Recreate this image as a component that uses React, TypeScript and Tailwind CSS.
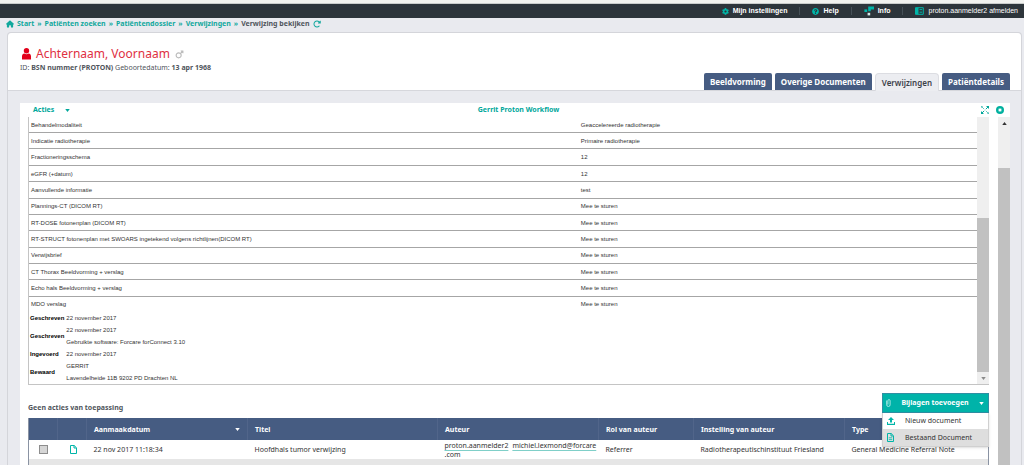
import type { ReactNode } from "react";
import { FaCog, FaQuestionCircle } from "react-icons/fa";
import { FaHouse, FaRotateRight, FaMars } from "react-icons/fa6";

const humanist = "font-['Noto_Sans',sans-serif]";
const arial = "font-['Liberation_Sans',sans-serif]";

const crumbs = ["Start", "Patiënten zoeken", "Patiëntendossier", "Verwijzingen"];

const fields: [string, string][] = [
  ["Behandelmodaliteit", "Geaccelereerde radiotherapie"],
  ["Indicatie radiotherapie", "Primaire radiotherapie"],
  ["Fractioneringsschema", "12"],
  ["eGFR (+datum)", "12"],
  ["Aanvullende informatie", "test"],
  ["Plannings-CT (DICOM RT)", "Mee te sturen"],
  ["RT-DOSE fotonenplan (DICOM RT)", "Mee te sturen"],
  ["RT-STRUCT fotonenplan met SWOARS ingetekend volgens richtlijnen(DICOM RT)", "Mee te sturen"],
  ["Verwijsbrief", "Mee te sturen"],
  ["CT Thorax Beeldvorming + verslag", "Mee te sturen"],
  ["Echo hals Beeldvorming + verslag", "Mee te sturen"],
  ["MDO verslag", "Mee te sturen"],
];

const meta: [string, string[]][] = [
  ["Geschreven", ["22 november 2017"]],
  ["Geschreven", ["22 november 2017", "Gebruikte software: Forcare forConnect 3.10"]],
  ["Ingevoerd", ["22 november 2017"]],
  ["Bewaard", ["GERRIT", "Lavendelheide 11B 9202 PD Drachten NL"]],
];

const tabs = ["Beeldvorming", "Overige Documenten", "Verwijzingen", "Patiëntdetails"];

function Caret({ className }: { className: string }) {
  return (
    <svg viewBox="0 0 6 4" className={className} fill="currentColor" aria-hidden="true">
      <path d="M0 0h6L3 4z" />
    </svg>
  );
}

function PersonIcon() {
  return (
    <svg viewBox="0 0 9 12" className="h-3 w-[9px] text-[#e2001a]" fill="currentColor" aria-hidden="true">
      <circle cx="4.5" cy="2.8" r="2.7" />
      <path d="M0 11.6V8.2C0 6.6 1 5.6 2.4 5.4c1.2 1 3 1 4.2 0C8 5.600 9 6.600 9 8.200v3.400z" />
    </svg>
  );
}

function InfoIcon() {
  return (
    <svg viewBox="0 0 10 10" className="size-[10px]" aria-hidden="true">
      <path d="M4.200.6H10v2.800H6.800v1.800H4.200z" fill="#00b5a8" />
      <path d="M.4 3.400h2.800v2.600H.4z" fill="#00b5a8" />
      <path d="M3.600 6.800h2.600v2.600H3.600z" fill="#d5e9ea" />
    </svg>
  );
}

function LogoutIcon() {
  return (
    <svg viewBox="0 0 9 8" className="h-2 w-[9px]" aria-hidden="true">
      <path d="M.5.7h7.800v6.600H.5z" fill="none" stroke="#00b5a8" />
      <path d="M.5.7h3v6.600h-3z" fill="#00b5a8" />
      <path d="M4.500 2.600h2.700M4.500 5.200h2.700" stroke="#00b5a8" />
    </svg>
  );
}

function FileIcon({ lines = false }: { lines?: boolean }) {
  return (
    <svg viewBox="0 0 7 9" className="h-[9px] w-[7px] text-[#00b5a8]" fill="none" stroke="currentColor" aria-hidden="true">
      <path d="M.5.5h3.700l2.300 2.300v5.700h-6zM4 .5V3h2.500" />
      {lines && <path d="M1.800 4.800h3.400M1.800 6.600h3.400" strokeWidth=".8" />}
    </svg>
  );
}

function UploadIcon() {
  return (
    <svg viewBox="0 0 8 8" className="size-2 text-[#00b5a8]" fill="currentColor" aria-hidden="true">
      <path d="M4 0l3 3H5v2.600H3V3H1z" />
      <path d="M0 5h1v1.800h6V5h1v3H0z" />
    </svg>
  );
}

function ClipIcon() {
  return (
    <svg viewBox="0 0 5 8" className="h-2 w-[5px]" fill="none" stroke="#b6ece8" strokeWidth=".9" aria-hidden="true">
      <path d="M.7 1.500v4.300a1.700 1.700 0 003.400 0V1.700a1.100 1.100 0 00-2.200 0v3.900" />
    </svg>
  );
}

function ExpandIcon() {
  return (
    <svg viewBox="0 0 8 8" className="size-2 text-[#00a79b]" fill="currentColor" aria-hidden="true">
      <path d="M5 0h3v3zM3 8H0V5z" />
      <path d="M0 0h2.200L0 2.200zM8 8H5.800L8 5.800z" opacity=".6" />
      <path d="M7 1L4.800 3.200M1 7l2.200-2.200" stroke="currentColor" />
      <path d="M.8.8l2.400 2.400M7.200 7.200L4.800 4.800" stroke="currentColor" opacity=".6" />
    </svg>
  );
}

function CloseIcon() {
  return (
    <svg viewBox="0 0 8 8" className="size-2" aria-hidden="true">
      <circle cx="4" cy="4" r="4" fill="#00b09f" />
      <path d="M2.700 2.700l2.600 2.600M5.300 2.700L2.700 5.300" stroke="#fff" strokeWidth="1.300" />
    </svg>
  );
}

function TopLink({ icon, children, bold = true }: { icon: ReactNode; children: ReactNode; bold?: boolean }) {
  return (
    <a href="#" className={`flex items-center gap-1 ${bold ? "font-bold" : ""}`}>
      {icon}
      {children}
    </a>
  );
}

function Divider() {
  return <span className="mx-3 h-2 w-px bg-[#465057]" />;
}

function Th({ children, className = "" }: { children?: ReactNode; className?: string }) {
  return <th className={`border-r border-[#51658a] px-[7px] text-left font-bold ${className}`}>{children}</th>;
}

export default function App() {
  return (
    <div className={`flex h-screen flex-col overflow-hidden bg-[#e9eaef] text-[7px] leading-[12px] text-[#333] ${humanist}`}>
      <div className="h-1 shrink-0 border-b border-[#c9cccb] bg-[#f1f2ef]" />
      <nav className={`flex h-[14px] shrink-0 items-center justify-end bg-[#2d353b] pr-[6px] text-white ${arial}`}>
        <TopLink icon={<FaCog className="size-[7px] text-[#00b5a8]" />}>Mijn instellingen</TopLink>
        <Divider />
        <TopLink icon={<FaQuestionCircle className="size-[7px] text-[#00b5a8]" />}>Help</TopLink>
        <Divider />
        <TopLink icon={<InfoIcon />}>Info</TopLink>
        <Divider />
        <TopLink bold={false} icon={<LogoutIcon />}>proton.aanmelder2 afmelden</TopLink>
      </nav>

      <div className="flex h-[14px] shrink-0 items-center gap-[3px] pb-[2px] pl-[6px] font-bold text-[#12a89d]">
        <FaHouse className="size-2" />
        {crumbs.map((c) => (
          <span key={c} className="flex gap-[3px]">
            <a href="#">{c}</a>
            <span>»</span>
          </span>
        ))}
        <span className="text-[#50555c]">Verwijzing bekijken</span>
        <FaRotateRight className="size-2" />
      </div>

      <main className="ml-[7px] mr-[2px] flex min-h-0 flex-1 flex-col rounded-t border border-b-0 border-[#d4d5da]">
        <header className="flex h-[58px] shrink-0 items-end justify-between rounded-t border-b border-[#d6d7dc] bg-white pl-3">
          <div className="flex flex-col self-start pt-3">
            <h1 className="flex h-[18px] items-center gap-[5px] pl-[2px] text-[12px] text-[#e0303f]">
              <PersonIcon />
              Achternaam, Voornaam
              <FaMars className="size-[9px] text-[#bbb]" />
            </h1>
            <p className="leading-[10px] text-[#50555c]">
              ID: <b>BSN nummer (PROTON)</b> Geboortedatum: <b>13 apr 1968</b>
            </p>
          </div>
          <div role="tablist" className="mr-[11px] flex gap-[3px] text-[8px] font-bold">
            {tabs.map((t) => (
              <button
                key={t}
                role="tab"
                aria-selected={t === "Verwijzingen"}
                className={
                  t === "Verwijzingen"
                    ? "-mb-px h-[18px] rounded-t-sm border border-b-0 border-[#dcdde2] bg-[#ecedf1] px-[6px] font-semibold text-[#3c4149]"
                    : "h-[17px] rounded-t-xs bg-[#465c82] px-[6px] text-white"
                }
              >
                {t}
              </button>
            ))}
          </div>
        </header>

        <section className="ml-3 mr-[11px] mt-3 flex min-h-0 flex-1 flex-col bg-white">
          <div className="flex h-[14px] shrink-0 items-center pl-[13px] pr-[6px] font-bold text-[#00a79b]">
            <div className="flex flex-1">
              <button className="flex items-center gap-[11px] font-bold">
                Acties <Caret className="h-[3px] w-[5px]" />
              </button>
            </div>
            <h2>Gerrit Proton Workflow</h2>
            <div className="flex flex-1 justify-end gap-[7px]">
              <button aria-label="Vergroten"><ExpandIcon /></button>
              <button aria-label="Sluiten"><CloseIcon /></button>
            </div>
          </div>

          <div className="flex min-h-0 flex-1">
            <div className="flex min-w-0 flex-1 flex-col pl-2">
              <div className={`flex shrink-0 border-b border-l border-[#c4c4c4] text-[6px] ${arial}`}>
                <div className="min-w-0 flex-1">
                  <table className="h-[195px] w-full table-fixed border-collapse leading-[10px]">
                    <tbody>
                      {fields.map(([k, v], i) => (
                        <tr key={k} className={i < fields.length - 1 ? "border-b border-[#a6a6a6]" : ""}>
                          <td className="w-[58%] px-[2px]">{k}</td>
                          <td className="px-[2px]">{v}</td>
                        </tr>
                      ))}
                    </tbody>
                  </table>
                  <table className="border-collapse">
                    <tbody>
                      {meta.map(([k, lines], i) => (
                        <tr key={i}>
                          <th className="pl-px text-left font-bold text-black">{k}</th>
                          <td className="pl-[2px]">
                            {lines.map((l) => (
                              <p key={l}>{l}</p>
                            ))}
                          </td>
                        </tr>
                      ))}
                    </tbody>
                  </table>
                </div>
                <div className="flex w-3 flex-col bg-[#efefef]">
                  <div className="h-[101px]" />
                  <div className="flex-1 bg-[#c1c1c1]" />
                  <div className="flex h-3 items-center justify-center text-[#8a8a8a]">
                    <Caret className="h-[3px] w-[5px]" />
                  </div>
                </div>
              </div>

              <div className="flex shrink-0 items-start justify-between pt-2">
                <p className="mt-[9px] font-bold text-[#50555c]">Geen acties van toepassing</p>
                <div className="relative h-[25px] w-[107px]">
                  <button className="flex h-5 w-full items-center border border-[#2f8fa3] bg-[#00b3a9] pl-[3px] pr-1 font-bold text-white">
                    <ClipIcon />
                    <span className="flex-1 text-center">Bijlagen toevoegen</span>
                    <Caret className="h-[3px] w-[5px]" />
                  </button>
                  <div className="absolute inset-x-0 top-5 z-10 border border-t-0 border-[#d0d0d0] bg-white shadow-sm">
                    <button className="flex h-4 w-full items-center gap-[10px] pl-1">
                      <UploadIcon />
                      Nieuw document
                    </button>
                    <button className="flex h-[17px] w-full items-center gap-[11px] bg-[#dedede] pl-1">
                      <FileIcon lines />
                      Bestaand Document
                    </button>
                  </div>
                </div>
              </div>

              <table className="w-full shrink-0 table-fixed border-collapse border-x border-[#8a93a3] leading-[9px]">
                <thead>
                  <tr className="h-[22px] bg-[#465c82] text-white">
                    <Th className="w-[29px]" />
                    <Th className="w-[29px]" />
                    <Th className="w-[161px]">
                      <span className="flex items-center justify-between">
                        Aanmaakdatum <Caret className="h-[3px] w-[5px]" />
                      </span>
                    </Th>
                    <Th className="w-[190px]">Titel</Th>
                    <Th className="w-[161px]">Auteur</Th>
                    <Th className="w-[95px]">Rol van auteur</Th>
                    <Th className="w-[151px]">Instelling van auteur</Th>
                    <Th>Type</Th>
                  </tr>
                </thead>
                <tbody>
                  <tr className="h-[19px] whitespace-nowrap">
                    <td className="text-center">
                      <input
                        type="checkbox"
                        aria-label="Selecteer document"
                        className="mx-auto block size-[9px] appearance-none border border-[#8d8d8d] bg-[#d6d6d6]"
                      />
                    </td>
                    <td className="pl-3"><FileIcon /></td>
                    <td className="px-[7px]">22 nov 2017 11:18:34</td>
                    <td className="px-[7px]">Hoofdhals tumor verwijzing</td>
                    <td className="pl-[7px]">
                      <a href="#" className="mr-1 underline decoration-[#7fcfc8] underline-offset-2">proton.aanmelder2</a>
                      <a href="#" className="underline decoration-[#7fcfc8] underline-offset-2">michiel.lexmond@forcare<br />.com</a>
                    </td>
                    <td className="px-[7px]">Referrer</td>
                    <td className="px-[7px]">Radiotherapeutischinstituut Friesland</td>
                    <td className="px-[7px]">General Medicine Referral Note</td>
                  </tr>
                </tbody>
              </table>
              <div className="flex-1 border-x border-[#8a93a3] bg-[#e6e6e6]" />
            </div>

            <div className="ml-[9px] flex w-3 flex-col bg-[#efefef]">
              <div className="flex h-[51px] justify-center pt-[5px] text-[#333]">
                <Caret className="h-[3px] w-[5px] rotate-180" />
              </div>
              <div className="flex-1 bg-[#c1c1c1]" />
            </div>
          </div>
        </section>
      </main>
    </div>
  );
}
